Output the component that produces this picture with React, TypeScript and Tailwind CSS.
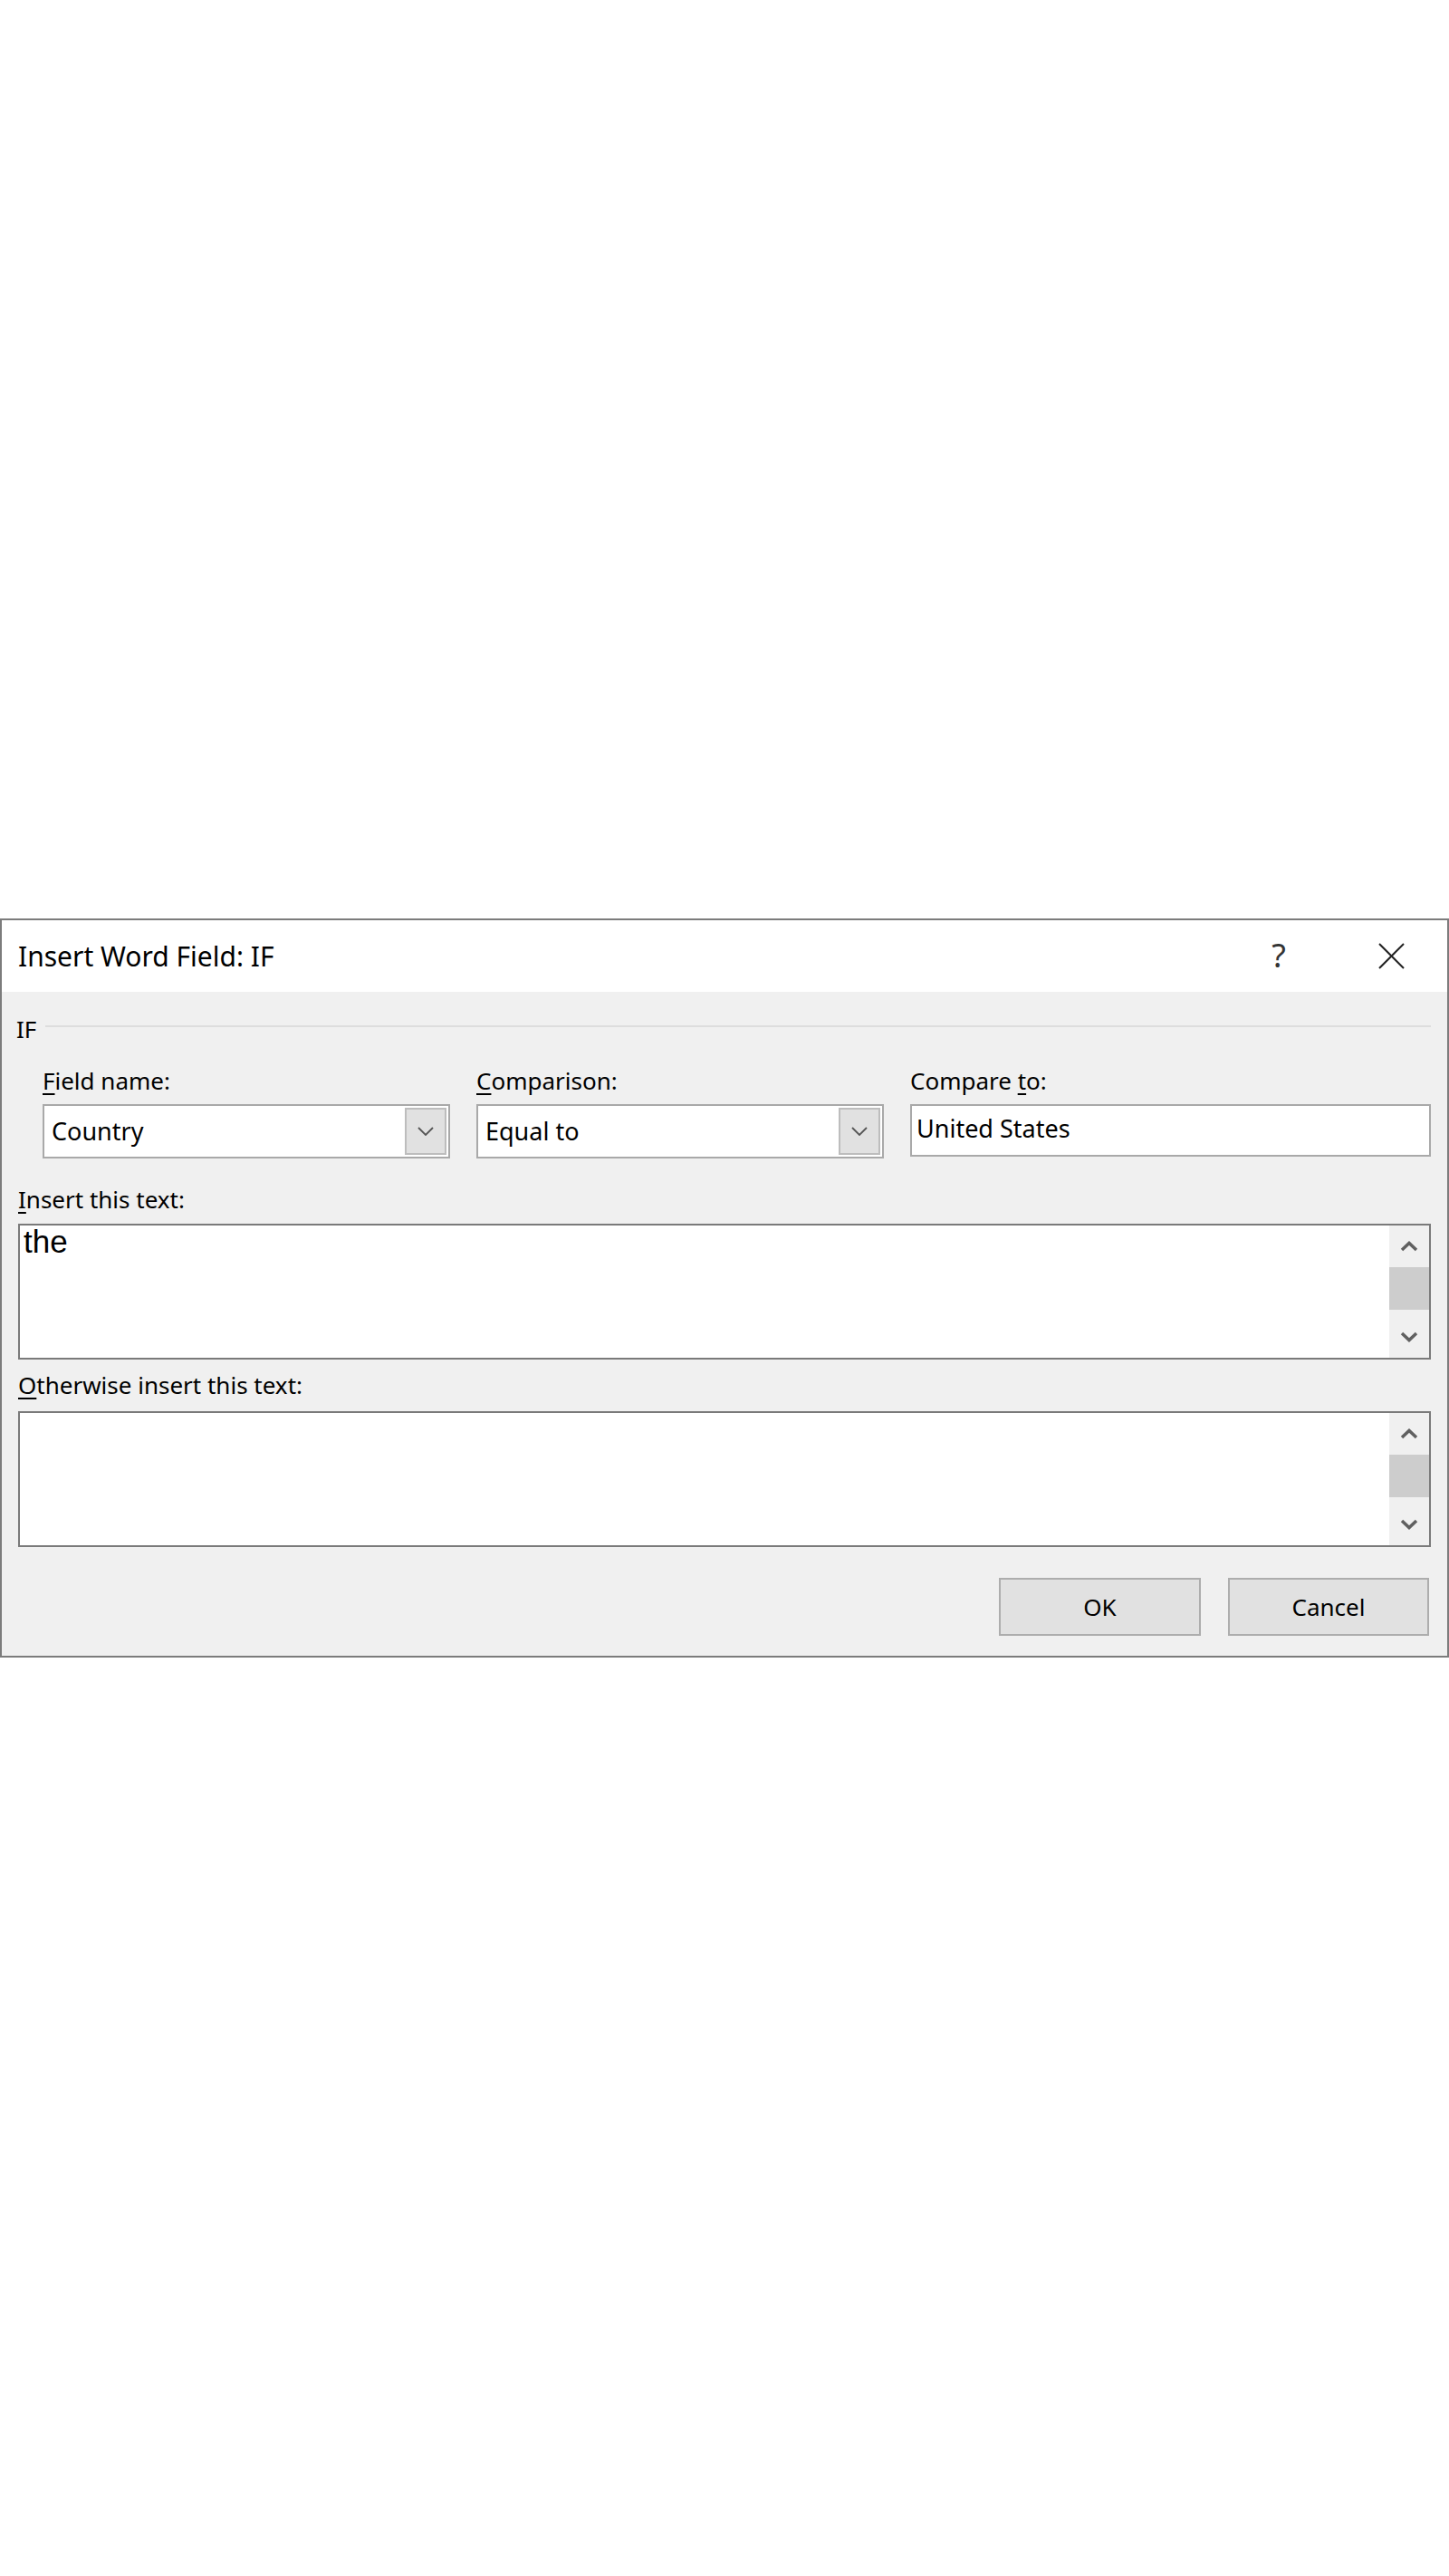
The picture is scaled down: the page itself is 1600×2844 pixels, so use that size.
import React from "react";

const Chevron = ({ up }: { up?: boolean }) => (
  <svg width="20" height="12" viewBox="0 0 20 12" fill="none">
    <polyline
      points={up ? "2,10 10,2.5 18,10" : "2,2 10,9.5 18,2"}
      stroke="#606060"
      strokeWidth="3.5"
      strokeLinejoin="miter"
      fill="none"
    />
  </svg>
);

const ScrollBar = () => (
  <div className="w-[44px] h-full bg-[#f0f0f0] flex flex-col shrink-0">
    <div className="h-[46px] flex items-center justify-center">
      <Chevron up />
    </div>
    <div className="h-[47px] bg-[#cdcdcd]" />
    <div className="flex-1" />
    <div className="h-[46px] flex items-center justify-center">
      <Chevron />
    </div>
  </div>
);

const Combo = ({ value }: { value: string }) => (
  <div className="h-[60px] border-2 border-[#a9a9a9] bg-white flex items-stretch p-[2px]">
    <div className="flex-1 flex items-center pl-[6px] text-[27px] text-black">{value}</div>
    <div className="w-[46px] border-2 border-[#bdbdbd] bg-[#e1e1e1] flex items-center justify-center">
      <svg width="18" height="10" viewBox="0 0 18 10" fill="none">
        <polyline points="1,1 9,9 17,1" stroke="#555555" strokeWidth="1.8" fill="none" />
      </svg>
    </div>
  </div>
);

const U = ({ children }: { children: React.ReactNode }) => (
  <span className="underline underline-offset-[4px] decoration-[2px]">{children}</span>
);

export default function App() {
  return (
    <div
      className="min-h-[2844px] bg-white flex items-center"
      style={{ fontFamily: "'Noto Sans', 'Open Sans', sans-serif" }}
    >
      <div className="w-full h-[816px] border-2 border-[#7c7c7c] bg-[#f0f0f0] flex flex-col">
        {/* Title bar */}
        <div className="h-[79px] bg-white flex items-center pl-[18px] pr-[47px] shrink-0">
          <div className="text-[30px] text-black">Insert Word Field: IF</div>
          <div className="ml-auto w-[24px] text-center text-[36px] leading-none text-[#333333] mt-[-2px]">?</div>
          <div className="ml-[98px] w-[29px] h-[29px]">
            <svg width="29" height="29" viewBox="0 0 29 29" fill="none">
              <line x1="1" y1="1" x2="28" y2="28" stroke="#222222" strokeWidth="2" />
              <line x1="28" y1="1" x2="1" y2="28" stroke="#222222" strokeWidth="2" />
            </svg>
          </div>
        </div>

        {/* Body */}
        <div className="flex-1 flex flex-col pt-[26px] pl-[18px] pr-[18px] text-black">
          {/* IF group header */}
          <div className="h-[30px] flex items-center">
            <div className="text-[26px] ml-[-2px]">IF</div>
            <div className="flex-1 h-[2px] bg-[#dddddd] ml-[10px] mt-[-6px]" />
          </div>

          {/* Fields row */}
          <div className="mt-[24px] pl-[27px] grid grid-cols-[450px_450px_1fr] gap-x-[29px]">
            <div className="flex flex-col">
              <div className="h-[36px] flex items-center text-[26px]">
                <span><U>F</U>ield name:</span>
              </div>
              <div className="mt-[8px]">
                <Combo value="Country" />
              </div>
            </div>
            <div className="flex flex-col">
              <div className="h-[36px] flex items-center text-[26px]">
                <span><U>C</U>omparison:</span>
              </div>
              <div className="mt-[8px]">
                <Combo value="Equal to" />
              </div>
            </div>
            <div className="flex flex-col">
              <div className="h-[36px] flex items-center text-[26px]">
                <span>Compare <U>t</U>o:</span>
              </div>
              <div className="mt-[8px] h-[58px] border-2 border-[#a9a9a9] bg-white flex items-center pl-[5px] pb-[3px] text-[27px]">
                United States
              </div>
            </div>
          </div>

          {/* Insert this text */}
          <div className="mt-[27px] h-[36px] flex items-center text-[26px]">
            <span><U>I</U>nsert this text:</span>
          </div>
          <div className="mt-[9px] h-[150px] border-2 border-[#7a7a7a] bg-white flex">
            <div
              className="flex-1 pl-[4px] pt-0 text-[35px] leading-[36px] text-black"
              style={{ fontFamily: "'Liberation Sans', Arial, sans-serif" }}
            >
              the
            </div>
            <ScrollBar />
          </div>

          {/* Otherwise insert this text */}
          <div className="mt-[10px] h-[36px] flex items-center text-[26px]">
            <span><U>O</U>therwise insert this text:</span>
          </div>
          <div className="mt-[11px] h-[150px] border-2 border-[#7a7a7a] bg-white flex">
            <div className="flex-1" />
            <ScrollBar />
          </div>

          {/* Buttons */}
          <div className="mt-[34px] flex justify-end gap-[30px] pr-[2px]">
            <button className="w-[223px] h-[64px] border-2 border-[#adadad] bg-[#e1e1e1] text-[26px] text-black">
              OK
            </button>
            <button className="w-[222px] h-[64px] border-2 border-[#adadad] bg-[#e1e1e1] text-[26px] text-black">
              Cancel
            </button>
          </div>
        </div>
      </div>
    </div>
  );
}
